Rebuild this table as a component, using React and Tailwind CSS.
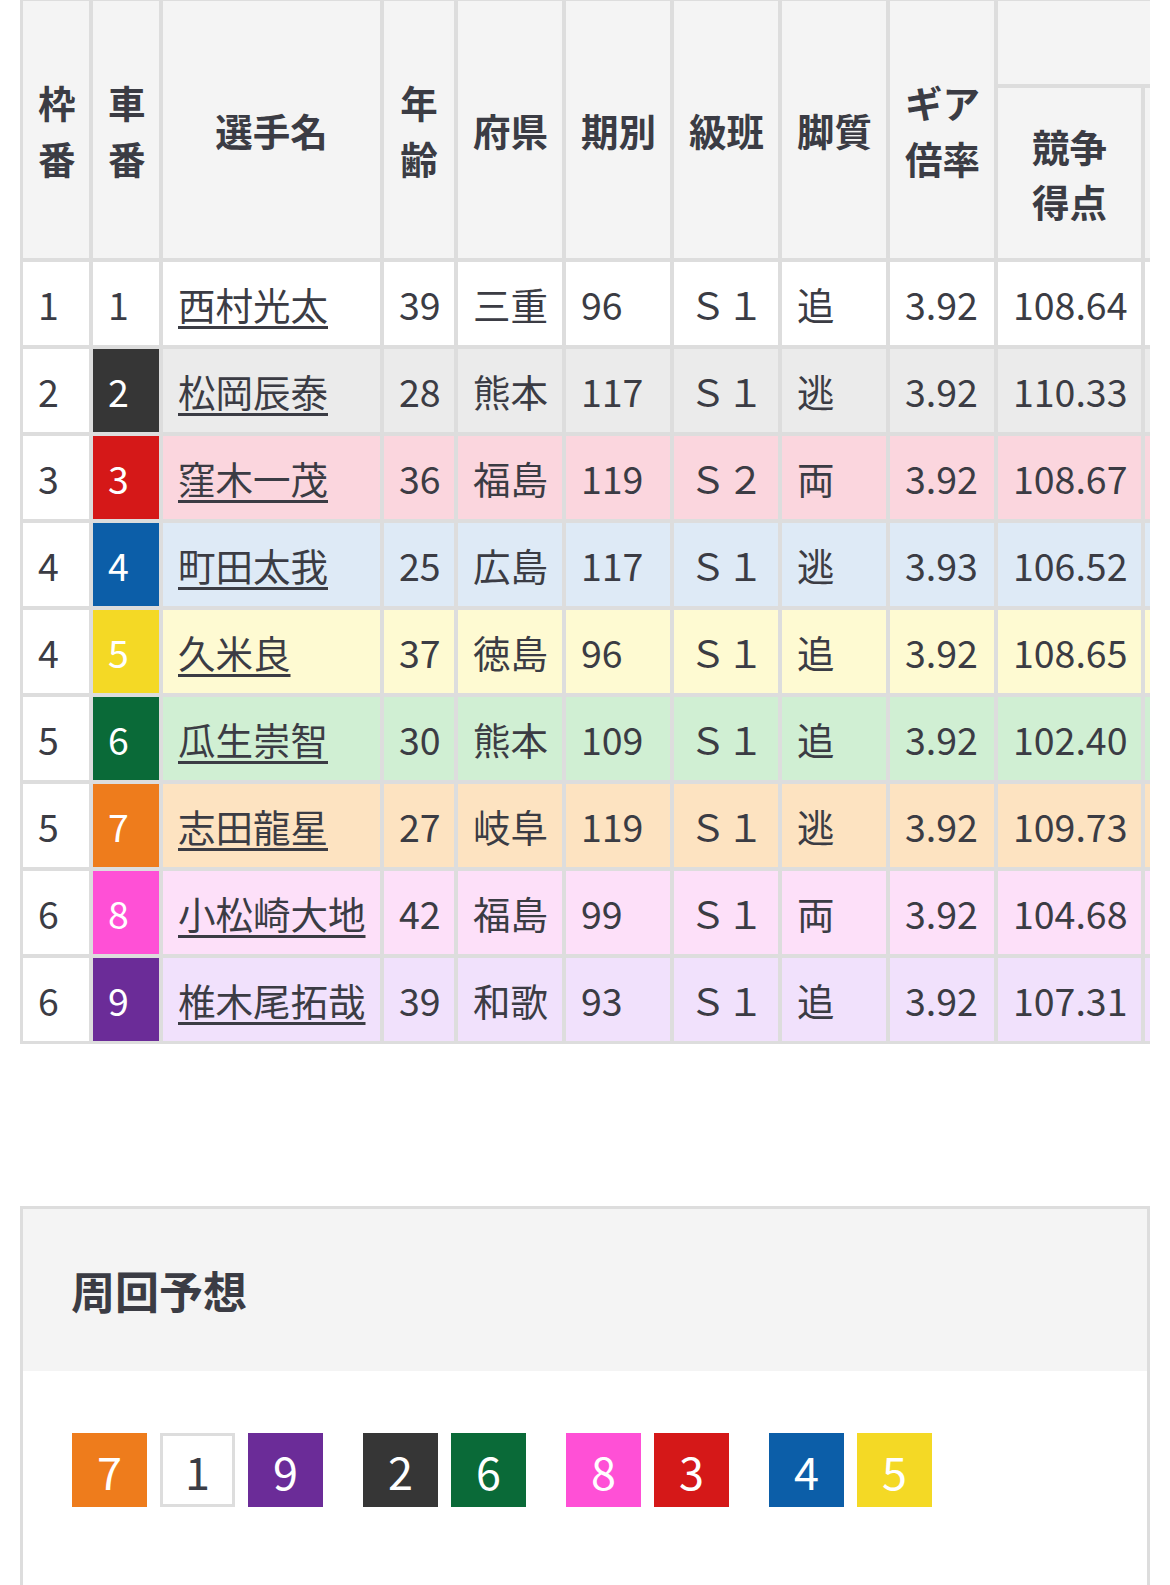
import React from "react";

const riders = [
  { waku: 1, car: 1, name: "西村光太", age: 39, pref: "三重", term: 96, cls: "Ｓ１", leg: "追", gear: "3.92", score: "108.64", carBg: "bg-white", carText: "text-[#3b3c44]", tint: "bg-white" },
  { waku: 2, car: 2, name: "松岡辰泰", age: 28, pref: "熊本", term: 117, cls: "Ｓ１", leg: "逃", gear: "3.92", score: "110.33", carBg: "bg-[#363636]", carText: "text-white", tint: "bg-[#ebebeb]" },
  { waku: 3, car: 3, name: "窪木一茂", age: 36, pref: "福島", term: 119, cls: "Ｓ２", leg: "両", gear: "3.92", score: "108.67", carBg: "bg-[#d51818]", carText: "text-white", tint: "bg-[#fbd6de]" },
  { waku: 4, car: 4, name: "町田太我", age: 25, pref: "広島", term: 117, cls: "Ｓ１", leg: "逃", gear: "3.93", score: "106.52", carBg: "bg-[#0c5ea8]", carText: "text-white", tint: "bg-[#deeaf6]" },
  { waku: 4, car: 5, name: "久米良", age: 37, pref: "徳島", term: 96, cls: "Ｓ１", leg: "追", gear: "3.92", score: "108.65", carBg: "bg-[#f4d925]", carText: "text-white", tint: "bg-[#fefad2]" },
  { waku: 5, car: 6, name: "瓜生崇智", age: 30, pref: "熊本", term: 109, cls: "Ｓ１", leg: "追", gear: "3.92", score: "102.40", carBg: "bg-[#0a6a38]", carText: "text-white", tint: "bg-[#d0efd3]" },
  { waku: 5, car: 7, name: "志田龍星", age: 27, pref: "岐阜", term: 119, cls: "Ｓ１", leg: "逃", gear: "3.92", score: "109.73", carBg: "bg-[#ee7c1c]", carText: "text-white", tint: "bg-[#fde3c1]" },
  { waku: 6, car: 8, name: "小松崎大地", age: 42, pref: "福島", term: 99, cls: "Ｓ１", leg: "両", gear: "3.92", score: "104.68", carBg: "bg-[#ff50d6]", carText: "text-white", tint: "bg-[#fde0f9]" },
  { waku: 6, car: 9, name: "椎木尾拓哉", age: 39, pref: "和歌", term: 93, cls: "Ｓ１", leg: "追", gear: "3.92", score: "107.31", carBg: "bg-[#6b2c98]", carText: "text-white", tint: "bg-[#f1e1fc]" },
];

const chipColors = {
  1: "bg-white text-[#3b3c44] border-[3px] border-[#dddddd]",
  2: "bg-[#363636] text-white",
  3: "bg-[#d51818] text-white",
  4: "bg-[#0c5ea8] text-white",
  5: "bg-[#f4d925] text-white",
  6: "bg-[#0a6a38] text-white",
  7: "bg-[#ee7c1c] text-white",
  8: "bg-[#ff50d6] text-white",
  9: "bg-[#6b2c98] text-white",
};

const lapGroups = [[7, 1, 9], [2, 6], [8, 3], [4, 5]];

const th = "border-2 border-[#dddddd] bg-[#f4f4f4] px-[15px] py-0 text-center align-middle font-bold whitespace-nowrap";
const td = "border-2 border-[#dddddd] px-[15px] py-0 text-left align-middle font-normal whitespace-nowrap";

const App = () => {
  return (
    <div
      className="h-[1585px] overflow-hidden bg-white px-[20px] text-[#3b3c44]"
      style={{ fontFamily: '"Noto Sans CJK JP", "Noto Sans", sans-serif' }}
    >
      {/* 出走表 */}
      <div className="-mt-[2px] overflow-hidden">
        <table className="w-[1271px] table-fixed border-separate border-spacing-0 border border-[#dddddd] text-[37.5px] leading-[1.48]">
          <colgroup>
            <col className="w-[70px]" />
            <col className="w-[70px]" />
            <col className="w-[221px]" />
            <col className="w-[74px]" />
            <col className="w-[108px]" />
            <col className="w-[108px]" />
            <col className="w-[108px]" />
            <col className="w-[108px]" />
            <col className="w-[108px]" />
            <col className="w-[147px]" />
            <col className="w-[147px]" />
          </colgroup>
          <thead>
            <tr className="h-[87px]">
              <th rowSpan={2} className={th}>枠<br />番</th>
              <th rowSpan={2} className={th}>車<br />番</th>
              <th rowSpan={2} className={th}>選手名</th>
              <th rowSpan={2} className={th}>年<br />齢</th>
              <th rowSpan={2} className={th}>府県</th>
              <th rowSpan={2} className={th}>期別</th>
              <th rowSpan={2} className={th}>級班</th>
              <th rowSpan={2} className={th}>脚質</th>
              <th rowSpan={2} className={th}>ギア<br />倍率</th>
              <th colSpan={2} className={th}></th>
            </tr>
            <tr className="h-[174px]">
              <th className={th}>競争<br />得点</th>
              <th className={th}></th>
            </tr>
          </thead>
          <tbody>
            {riders.map((r) => (
              <tr key={r.car} className="h-[87px]">
                <td className={`${td} bg-white`}>{r.waku}</td>
                <td className={`${td} ${r.carBg} ${r.carText}`}>{r.car}</td>
                <td className={`${td} ${r.tint}`}>
                  <a href="#" className="underline decoration-[3px] underline-offset-[6px]">
                    {r.name}
                  </a>
                </td>
                <td className={`${td} ${r.tint}`}>{r.age}</td>
                <td className={`${td} ${r.tint}`}>{r.pref}</td>
                <td className={`${td} ${r.tint}`}>{r.term}</td>
                <td className={`${td} ${r.tint}`}>{r.cls}</td>
                <td className={`${td} ${r.tint}`}>{r.leg}</td>
                <td className={`${td} ${r.tint}`}>{r.gear}</td>
                <td className={`${td} ${r.tint}`}>{r.score}</td>
                <td className={`${td} ${r.tint}`}></td>
              </tr>
            ))}
          </tbody>
        </table>
      </div>

      {/* 周回予想 */}
      <section className="mt-[162px] border-[3px] border-[#dddddd]">
        <div className="flex h-[162px] items-center bg-[#f4f4f4] pl-[48px]">
          <h2 className="text-[44px] font-bold leading-[1.5]">周回予想</h2>
        </div>
        <div className="flex gap-[40px] bg-white pl-[49px] pr-[48px] pt-[62px] pb-[200px]">
          {lapGroups.map((group, i) => (
            <div key={i} className="flex gap-[13px]">
              {group.map((n) => (
                <span
                  key={n}
                  className={`flex h-[74px] w-[75px] items-center justify-center text-[45px] leading-none ${chipColors[n]}`}
                >
                  {n}
                </span>
              ))}
            </div>
          ))}
        </div>
      </section>
    </div>
  );
};

export default App;
